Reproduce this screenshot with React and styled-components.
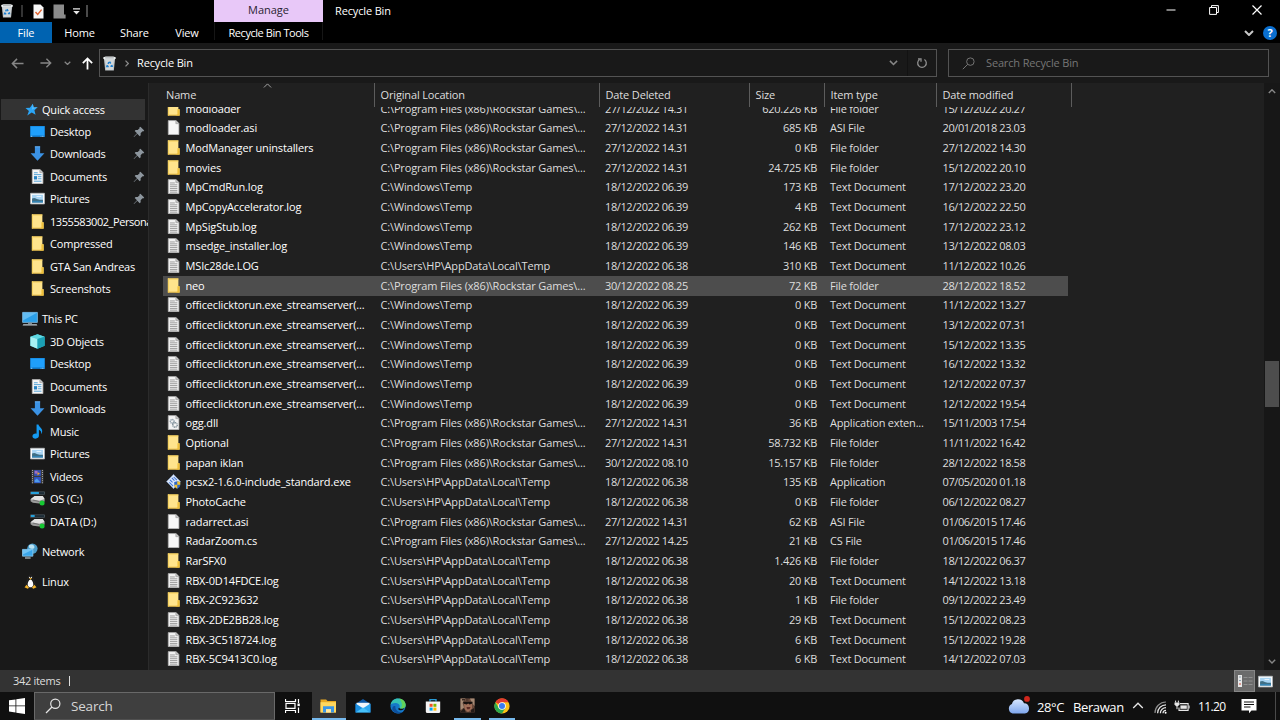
import React from 'react';
import styled, { createGlobalStyle } from 'styled-components';

const GlobalStyle = createGlobalStyle`
  * {
    box-sizing: border-box;
  }
  body {
    margin: 0;
    background: #000;
    overflow: hidden;
  }
  svg {
    display: block;
    flex-shrink: 0;
  }
`;

/* ---------- data ---------- */

const GAMES = 'C:\\Program Files (x86)\\Rockstar Games\\...';
const WIN_TEMP = 'C:\\Windows\\Temp';
const USER_TEMP = 'C:\\Users\\HP\\AppData\\Local\\Temp';

// icon, name, location, deleted, size, type, modified
const files = [
  ['folder', 'modloader', GAMES, '27/12/2022 14.31', '620.226 KB', 'File folder', '15/12/2022 20.27'],
  ['blank', 'modloader.asi', GAMES, '27/12/2022 14.31', '685 KB', 'ASI File', '20/01/2018 23.03'],
  ['folder', 'ModManager uninstallers', GAMES, '27/12/2022 14.31', '0 KB', 'File folder', '27/12/2022 14.30'],
  ['folder', 'movies', GAMES, '27/12/2022 14.31', '24.725 KB', 'File folder', '15/12/2022 20.10'],
  ['text', 'MpCmdRun.log', WIN_TEMP, '18/12/2022 06.39', '173 KB', 'Text Document', '17/12/2022 23.20'],
  ['text', 'MpCopyAccelerator.log', WIN_TEMP, '18/12/2022 06.39', '4 KB', 'Text Document', '16/12/2022 22.50'],
  ['text', 'MpSigStub.log', WIN_TEMP, '18/12/2022 06.39', '262 KB', 'Text Document', '17/12/2022 23.12'],
  ['text', 'msedge_installer.log', WIN_TEMP, '18/12/2022 06.39', '146 KB', 'Text Document', '13/12/2022 08.03'],
  ['text', 'MSIc28de.LOG', USER_TEMP, '18/12/2022 06.38', '310 KB', 'Text Document', '11/12/2022 10.26'],
  ['folder', 'neo', GAMES, '30/12/2022 08.25', '72 KB', 'File folder', '28/12/2022 18.52'],
  ['text', 'officeclicktorun.exe_streamserver(...', WIN_TEMP, '18/12/2022 06.39', '0 KB', 'Text Document', '11/12/2022 13.27'],
  ['text', 'officeclicktorun.exe_streamserver(...', WIN_TEMP, '18/12/2022 06.39', '0 KB', 'Text Document', '13/12/2022 07.31'],
  ['text', 'officeclicktorun.exe_streamserver(...', WIN_TEMP, '18/12/2022 06.39', '0 KB', 'Text Document', '15/12/2022 13.35'],
  ['text', 'officeclicktorun.exe_streamserver(...', WIN_TEMP, '18/12/2022 06.39', '0 KB', 'Text Document', '16/12/2022 13.32'],
  ['text', 'officeclicktorun.exe_streamserver(...', WIN_TEMP, '18/12/2022 06.39', '0 KB', 'Text Document', '12/12/2022 07.37'],
  ['text', 'officeclicktorun.exe_streamserver(...', WIN_TEMP, '18/12/2022 06.39', '0 KB', 'Text Document', '12/12/2022 19.54'],
  ['dll', 'ogg.dll', GAMES, '27/12/2022 14.31', '36 KB', 'Application exten...', '15/11/2003 17.54'],
  ['folder', 'Optional', GAMES, '27/12/2022 14.31', '58.732 KB', 'File folder', '11/11/2022 16.42'],
  ['folder', 'papan iklan', GAMES, '30/12/2022 08.10', '15.157 KB', 'File folder', '28/12/2022 18.58'],
  ['app', 'pcsx2-1.6.0-include_standard.exe', USER_TEMP, '18/12/2022 06.38', '135 KB', 'Application', '07/05/2020 01.18'],
  ['folder', 'PhotoCache', USER_TEMP, '18/12/2022 06.38', '0 KB', 'File folder', '06/12/2022 08.27'],
  ['blank', 'radarrect.asi', GAMES, '27/12/2022 14.31', '62 KB', 'ASI File', '01/06/2015 17.46'],
  ['blank', 'RadarZoom.cs', GAMES, '27/12/2022 14.25', '21 KB', 'CS File', '01/06/2015 17.46'],
  ['folder', 'RarSFX0', USER_TEMP, '18/12/2022 06.38', '1.426 KB', 'File folder', '18/12/2022 06.37'],
  ['text', 'RBX-0D14FDCE.log', USER_TEMP, '18/12/2022 06.38', '20 KB', 'Text Document', '14/12/2022 13.18'],
  ['folder', 'RBX-2C923632', USER_TEMP, '18/12/2022 06.38', '1 KB', 'File folder', '09/12/2022 23.49'],
  ['text', 'RBX-2DE2BB28.log', USER_TEMP, '18/12/2022 06.38', '29 KB', 'Text Document', '15/12/2022 08.23'],
  ['text', 'RBX-3C518724.log', USER_TEMP, '18/12/2022 06.38', '6 KB', 'Text Document', '15/12/2022 19.28'],
  ['text', 'RBX-5C9413C0.log', USER_TEMP, '18/12/2022 06.38', '6 KB', 'Text Document', '14/12/2022 07.03'],
];

const sidebar = [
  {
    title: 'Quick access',
    icon: 'star',
    active: true,
    items: [
      { icon: 'desktop', label: 'Desktop', pinned: true },
      { icon: 'download', label: 'Downloads', pinned: true },
      { icon: 'document', label: 'Documents', pinned: true },
      { icon: 'picture', label: 'Pictures', pinned: true },
      { icon: 'folder', label: '1355583002_Persona', tight: true },
      { icon: 'folder', label: 'Compressed' },
      { icon: 'folder', label: 'GTA San Andreas' },
      { icon: 'folder', label: 'Screenshots' },
    ],
  },
  {
    title: 'This PC',
    icon: 'pc',
    items: [
      { icon: 'cube', label: '3D Objects' },
      { icon: 'desktop', label: 'Desktop' },
      { icon: 'document', label: 'Documents' },
      { icon: 'download', label: 'Downloads' },
      { icon: 'music', label: 'Music' },
      { icon: 'picture', label: 'Pictures' },
      { icon: 'video', label: 'Videos' },
      { icon: 'driveC', label: 'OS (C:)' },
      { icon: 'driveD', label: 'DATA (D:)' },
    ],
  },
  { title: 'Network', icon: 'network', items: [] },
  { title: 'Linux', icon: 'linux', items: [] },
];

/* ---------- icons ---------- */

const Svg = ({ size = 15, children }) => (
  <svg width={size} height={size} viewBox="0 0 16 16" fill="none">{children}</svg>
);

const Drive = ({ used }) => (
  <Svg>
    <path d="M0.5 0.9h15v2.6h-15z" fill="#14242e" stroke="#5a6870" strokeWidth="0.7" />
    <path d={`M1 1h${used}v2.2H1z`} fill="#26a0da" />
    <path d="M0.6 8.8 5 5.4h8.6l2 3.4v2.4L10 13.4 3 12.6 0.6 11z" fill="#9b9b9b" />
    <path d="M0.6 8.8 5 5.2h8.6l2 3.2-6 2z" fill="#e2e2e2" />
    <path d="M3 9.6l7 1.6" stroke="#666" strokeWidth="0.8" />
    <circle cx="12.9" cy="12.8" r="2.7" fill="#16c832" />
  </Svg>
);

const icons = {
  folder: (
    <Svg>
      <path d="M2 0.4h11.2v8.4h1.3v6.6H2z" fill="#ffe48c" />
      <path d="M2 0.4h11.2v1.2H2z" fill="#f5cf58" />
      <path d="M2 0.4h1.2v15H2z" fill="#f7d362" />
      <path d="M12.2 8.8h2.3v6.6H9.8l2.4-1z" fill="#efc03a" />
      <path d="M2 14.6h12.5v0.9H2z" fill="#e8b93c" />
    </Svg>
  ),
  blank: (
    <Svg>
      <path d="M2.4 0.6h8.4l3 3v12H2.4z" fill="#f7f7f7" stroke="#a9a9a9" strokeWidth="0.8" />
      <path d="M10.5 0.7v3.2h3.2" fill="#c4c4c4" stroke="#9a9a9a" strokeWidth="0.7" />
    </Svg>
  ),
  text: (
    <Svg>
      <path d="M2.4 0.6h8.4l3 3v12H2.4z" fill="#f3f3f3" stroke="#a9a9a9" strokeWidth="0.8" />
      <path d="M10.5 0.7v3.2h3.2" fill="#c4c4c4" stroke="#9a9a9a" strokeWidth="0.7" />
      <path d="M4.2 4.2h5.2M4.2 6.2h7.9M4.2 8.2h7.9M4.2 10.2h7.9M4.2 12.2h7.9M4.2 14h7.9" stroke="#8d8d8d" strokeWidth="0.9" />
    </Svg>
  ),
  dll: (
    <Svg>
      <path d="M2.4 0.6h8.4l3 3v12H2.4z" fill="#f3f3f3" stroke="#a9a9a9" strokeWidth="0.8" />
      <path d="M10.5 0.7v3.2h3.2" fill="#c4c4c4" stroke="#9a9a9a" strokeWidth="0.7" />
      <circle cx="6.6" cy="6.8" r="2" stroke="#8798a4" strokeWidth="1.4" strokeDasharray="1.2 0.5" />
      <circle cx="9.6" cy="10.6" r="2.4" stroke="#74858f" strokeWidth="1.4" strokeDasharray="1.2 0.5" />
    </Svg>
  ),
  app: (
    <Svg size={15}>
      <path d="M8 0.4 15.4 8 8 15.6 0.6 8z" fill="#dbe7fa" stroke="#8ea6cf" strokeWidth="0.7" />
      <path d="M6.2 4.2 9 7M4.2 6.2 7 9M8.2 3.2l3.4 3.4M3.6 9l4 4" stroke="#3f74d6" strokeWidth="1.1" />
      <path d="M8.8 8.6 12 7.6l3.2 1v3c0 2-1.6 3.2-3.2 4-1.6-.8-3.2-2-3.2-4z" fill="#2c66c9" />
      <path d="M12 7.6l3.2 1v2.9H12zM8.8 11.5H12v4.1c-1.6-.8-3.2-2-3.2-4z" fill="#f2c230" />
    </Svg>
  ),
  star: (
    <Svg size={13}>
      <path d="M9.6 0.8 10.6 5.400l5-.2-4 3.700 1.400 5.700-4.700-2.800L2.800 15.400l2-5.600L0.600 6.200 6 5.800z" fill="#2ba6f7" />
      <path d="M9.600 0.800 10.600 5.400l5-.2-7.200 3z" fill="#53bdff" />
    </Svg>
  ),
  desktop: (
    <Svg>
      <path d="M0.2 2.2h15.6v11.6H0.2z" fill="#1793f0" />
      <path d="M1 3h14v8.6L1 12z" fill="#1f9ffb" />
      <path d="M0.2 12.4h15.6v1.4H0.2z" fill="#1272bb" />
      <path d="M1 13.1h1.4M11.4 13.1h.8M13 13.1h1.4" stroke="#cfeaff" strokeWidth="0.8" />
    </Svg>
  ),
  download: (
    <Svg>
      <path d="M5.2 0.4h5.6v7.400h4.600L8 15.800 0.6 7.800h4.600z" fill="#3b92e4" />
      <path d="M5.2 0.4h5.600v1H5.200z" fill="#69b2f3" />
    </Svg>
  ),
  document: (
    <Svg>
      <path d="M2.4 0.6h8.4l3 3v12H2.4z" fill="#f7f7f7" stroke="#b5b5b5" strokeWidth="0.8" />
      <path d="M10.5 0.7v3.2h3.2" fill="#c4c4c4" stroke="#9a9a9a" strokeWidth="0.7" />
      <path d="M4.2 4h4M4.2 6h8M4.2 13h8" stroke="#4da0d8" strokeWidth="1" />
      <path d="M4.2 7.6h3.4v3.6H4.2z" fill="#2884c4" />
      <path d="M8.6 8.2h3.6M8.6 10.4h3.6" stroke="#4da0d8" strokeWidth="1" />
    </Svg>
  ),
  picture: (
    <Svg>
      <path d="M0.6 2.4h14.8v11.4H0.6z" fill="#fff" stroke="#b6bcc0" strokeWidth="0.8" />
      <path d="M2.2 4h11.6v8.2H2.2z" fill="#a9d5f4" />
      <path d="M2.2 8c3-1.6 4 .2 6 .8 2.4.6 3.6.6 5.6.4v3H2.2z" fill="#3f6f86" />
      <path d="M2.2 10.8h11.6v1.4H2.2z" fill="#3285b9" />
      <path d="M7 5.4h5v1H7z" fill="#e9f5fd" />
    </Svg>
  ),
  pc: (
    <Svg size={16}>
      <path d="M0.6 1.4h14.8v10H0.6z" fill="#2b9fe8" stroke="#8fcdf3" strokeWidth="0.7" />
      <path d="M1 1.8h14L1 9.6z" fill="#63bdf3" />
      <path d="M6 11.6h4v1.4H6z" fill="#7f8c94" />
      <path d="M1.4 13.2h13.2l.8 1.4H.6z" fill="#c2ccd3" />
    </Svg>
  ),
  cube: (
    <Svg>
      <path d="M8 0.2 15.6 3v9.6L8 15.8 0.4 12.6V3z" fill="#35bdce" />
      <path d="M8 0.2 15.6 3 8 5.2 0.4 3z" fill="#5fd8e2" />
      <path d="M0.4 3 8 5.2v10.6L0.4 12.6z" fill="#a8f0f2" />
      <path d="M8 5.2 15.6 3v9.6L8 15.8z" fill="#1ba0b4" />
    </Svg>
  ),
  music: (
    <Svg>
      <path d="M7 0.6h2c.4 2.4 4 3.6 4 6.8 0 1.4-.5 2.4-1.2 3.2.5-2.6-.4-3.8-2.3-4.6v6.600c0 1.800-1.600 3-3.600 3S2.600 14.600 2.600 13c0-1.700 1.700-2.800 3.400-2.800.4 0 .7 0 1 .1z" fill="#149af2" />
    </Svg>
  ),
  video: (
    <Svg>
      <path d="M1.6 0.8h12.8v14.6H1.6z" fill="#3b3b3b" />
      <path d="M2.7 1v14.2M13.3 1v14.2" stroke="#b9b9b9" strokeWidth="1" strokeDasharray="1 1.2" />
      <path d="M4.4 1.2h7.2v6.2H4.4z" fill="#3550b4" />
      <path d="M4.4 8.6h7.2v6.4H4.4z" fill="#2f55c4" />
      <path d="M5 2h3v3H5z" fill="#a06ec0" />
      <path d="M8 3.4l2.6 1.2L8 6.8z" fill="#f0a12c" />
      <path d="M5 12l2.4-2 3.6 4H5z" fill="#4f9be8" />
    </Svg>
  ),
  driveC: <Drive used={8.5} />,
  driveD: <Drive used={4} />,
  network: (
    <Svg size={16}>
      <circle cx="10.4" cy="5.6" r="5.2" fill="#4a9cc9" />
      <path d="M7 2.2c3-2 6 0 5.400 2.200S8.600 6 7 4.600z" fill="#b9e2f3" />
      <path d="M0.5 6.4h10.4v6.8H0.5z" fill="#3aa6ea" stroke="#9fd7f7" strokeWidth="0.7" />
      <path d="M0.8 6.7h9.8L0.8 11.6z" fill="#71c4f5" />
      <path d="M3 14.4h5.6v1.2H3z" fill="#b9c4ca" />
    </Svg>
  ),
  linux: (
    <Svg>
      <path d="M8 1.2c2 0 2.500 1.500 2.500 3.400 0 2 2.500 4 2.500 7.400 0 1.600-1.500 2.600-5 2.600S3 13.600 3 12c0-3.400 2.500-5.400 2.500-7.400 0-1.900.5-3.400 2.500-3.400z" fill="#161616" stroke="#343434" strokeWidth="0.5" />
      <path d="M8 5.8c1.500 0 3 3 3 5.400 0 2-1.400 3-3 3s-3-1-3-3c0-2.400 1.500-5.400 3-5.400z" fill="#fafafa" />
      <path d="M6.6 4.6 8 4l1.400.6L8 6.200z" fill="#f5b42a" />
      <circle cx="7" cy="3.5" r="0.7" fill="#fff" />
      <circle cx="9" cy="3.5" r="0.7" fill="#fff" />
      <path d="M1.6 14.2 4 11.4l2.4 3.2-1.4 1z M14.4 14.2 12 11.4l-2.4 3.2 1.400 1z" fill="#f5b42a" />
    </Svg>
  ),
};

const BinIcon = ({ size = 15 }) => (
  <Svg size={size}>
    <path d="M2 2.400h12l-1.400 13H3.400z" fill="#bcc2c5" />
    <path d="M1.4 1.2 4 0.4h8l2.600.8v1.600L13 3.600H3l-1.600-.8z" fill="#edf0f1" />
    <path d="M3.4 1.6h9.2v.9H3.4z" fill="#8f979b" />
    <path d="M3.4 3.8h9.2l-1 10.8H4.4z" fill="#d3d8da" />
    <path d="M8 6l1.300 2M10.400 9.400l.4 1.600H9M7.200 11.200H5.200L5.700 9.600M6.400 8.400 7.400 6.400" stroke="#1d7fd0" strokeWidth="1.600" />
  </Svg>
);

const PinIcon = () => (
  <svg width="12" height="12" viewBox="0 0 12 12">
    <path d="M7.4 0.8l3.800 3.800-1 1-.7-.3-1.900 2 .1 2-1 .9-2.400-2.500L1 11l-.4-.3L4 7.200 1.700 5l.9-1 2.100.1 1.900-1.900-.3-.6z" fill="#8d969e" />
  </svg>
);

const Chevron = ({ dir = 'down', w = 9, color = '#9a9a9a', stroke = 1.4 }) => (
  <svg width={w} height={w * 0.6} viewBox="0 0 10 6" fill="none">
    <path d={dir === 'down' ? 'M1 1l4 4 4-4' : 'M1 5l4-4 4 4'} stroke={color} strokeWidth={stroke} />
  </svg>
);

const Arrow = ({ dir, color, size = 14 }) => {
  const paths = {
    left: 'M13.5 7H1.5M6.5 2 1.5 7l5 5',
    right: 'M0.5 7h12M7.5 2l5 5-5 5',
    up: 'M7 13.5v-12M2 6.5l5-5 5 5',
  };
  return (
    <svg width={size} height={size} viewBox="0 0 14 14" fill="none">
      <path d={paths[dir]} stroke={color} strokeWidth={dir === 'up' ? 1.9 : 1.6} />
    </svg>
  );
};

const SearchIcon = ({ size, color }) => (
  <svg width={size} height={size} viewBox="0 0 16 16" fill="none">
    <circle cx="10.3" cy="5.7" r="4.6" stroke={color} strokeWidth="1.2" />
    <path d="M7 9 1 15" stroke={color} strokeWidth="1.2" />
  </svg>
);

/* ---------- layout ---------- */

const Window = styled.div`
  width: 1280px;
  height: 720px;
  display: flex;
  flex-direction: column;
  overflow: hidden;
  background: #191919;
  color: #fff;
  font-family: 'Open Sans', 'Noto Sans', sans-serif;
  font-size: 11px;
  letter-spacing: -0.15px;
  white-space: nowrap;
  cursor: default;
`;

const TitleBar = styled.div`
  height: 22px;
  display: flex;
  background: #000;
`;

const QuickTools = styled.div`
  width: 214px;
  display: flex;
  align-items: center;
`;

const ToolSlot = styled.div`
  width: ${(p) => p.$w}px;
  display: flex;
`;

const ToolDivider = styled.div`
  width: 2px;
  height: 12px;
  background: ${(p) => p.$color || '#333'};
`;

const ManageTab = styled.div`
  width: 109px;
  text-align: center;
  line-height: 19px;
  letter-spacing: 0;
  background: #e8c8f8;
  color: #2a1f30;
`;

const WindowTitle = styled.div`
  flex: 1;
  padding-left: 12px;
  line-height: 22px;
`;

const WindowButtons = styled.div`
  display: flex;
  padding-right: 2px;
`;

const WindowButton = styled.div`
  width: 43px;
  height: 20px;
  display: flex;
  align-items: center;
  justify-content: center;
`;

const Ribbon = styled.div`
  height: 21px;
  display: flex;
  background: #000;
`;

const RibbonTab = styled.div`
  width: ${(p) => p.$w}px;
  text-align: center;
  line-height: 22px;
  background: ${(p) => (p.$file ? '#0063b1' : 'transparent')};
`;

const ToolsTab = styled.div`
  width: 109px;
  height: 18px;
  margin-left: 2px;
  text-align: center;
  line-height: 22px;
  letter-spacing: -0.45px;
  border: solid #161616;
  border-width: 0 1px;
`;

const RibbonEnd = styled.div`
  flex: 1;
  display: flex;
  align-items: center;
  justify-content: flex-end;
  gap: 9px;
  padding-right: 3px;
`;

const HelpBadge = styled.div`
  width: 14px;
  height: 14px;
  border-radius: 50%;
  background: #0a6fd0;
  font-weight: 700;
  line-height: 14px;
  text-align: center;
`;

const AddressRow = styled.div`
  height: 40px;
  padding: 6px 11px 6px 0;
  display: flex;
  background: #191919;
`;

const NavButtons = styled.div`
  width: 99px;
  padding: 0 5px 0 11px;
  display: flex;
  align-items: center;
`;

const NavGap = styled.div`
  width: ${(p) => p.$w}px;
`;

const Field = styled.div`
  width: ${(p) => p.$w}px;
  height: 28px;
  margin-right: ${(p) => p.$gap || 0}px;
  padding-left: ${(p) => p.$pad}px;
  display: flex;
  align-items: center;
  gap: ${(p) => p.$inner}px;
  border: 1px solid #535353;
  background: #191919;
  color: ${(p) => p.$color || '#fff'};
`;

const FieldText = styled.span`
  padding-bottom: 2px;
`;

const FieldEnd = styled.div`
  height: 26px;
  margin-left: auto;
  display: flex;
`;

const FieldButton = styled.div`
  width: 28px;
  display: flex;
  align-items: center;
  justify-content: center;
  border-right: ${(p) => (p.$divided ? '1px solid #121212' : 0)};
`;

const Body = styled.div`
  height: 587px;
  display: flex;
`;

const Sidebar = styled.div`
  width: 149px;
  padding-top: 16px;
  overflow: hidden;
  border-right: 1px solid #2b2b2b;
  background: #191919;
`;

const Group = styled.div`
  margin-bottom: 7.5px;
`;

const SideItem = styled.div`
  width: 144px;
  height: ${(p) => (p.$active ? 21 : 22.5)}px;
  margin-left: 1px;
  padding-left: ${(p) => (p.$child ? 28 : 21)}px;
  display: flex;
  align-items: center;
  background: ${(p) => (p.$active ? '#333' : 'transparent')};
`;

const SideIcon = styled.div`
  width: 16px;
  margin-right: ${(p) => (p.$child ? 5 : 4)}px;
  padding-left: ${(p) => (p.$active ? 2 : 0)}px;
  display: flex;
  justify-content: center;
  flex-shrink: 0;
`;

const SideLabel = styled.div`
  flex: 1;
  letter-spacing: ${(p) => (p.$tight ? -0.43 : -0.2)}px;
`;

const PinSlot = styled.div`
  padding: 1px 0 0 0;
`;

const Content = styled.div`
  flex: 1;
  background: #202020;
  overflow: hidden;
`;

const Header = styled.div`
  height: 24px;
  display: flex;
`;

const HeaderCell = styled.div`
  position: relative;
  width: ${(p) => p.$w}px;
  padding-left: ${(p) => p.$pad || 5.5}px;
  line-height: 24px;
  color: #dedede;
  border-right: 1px solid #5c5c5c;
`;

// lies over the name header, centred on the column
const SortMark = styled.div`
  position: absolute;
  top: 0;
  left: 114px;
`;

const List = styled.div`
  height: 563px;
  overflow: hidden;
`;

const Rows = styled.div`
  margin-top: -8px;
`;

const Row = styled.div`
  width: 905px;
  height: 19.68px;
  margin-left: 14px;
  padding-bottom: 1.4px;
  display: flex;
  align-items: center;
  background: ${(p) => (p.$hover ? '#4d4d4d' : 'transparent')};
`;

const FileIcon = styled.div`
  width: 22.5px;
  padding-left: 3px;
`;

const Cell = styled.div`
  width: ${(p) => p.$w}px;
  text-align: ${(p) => (p.$right ? 'right' : 'left')};
  color: ${(p) => (p.$name ? '#fff' : '#dedede')};
`;

const DateCell = styled(Cell)`
  letter-spacing: -0.4px;
`;

const SizeCell = styled(Cell)`
  padding-right: 7px;
  letter-spacing: -0.25px;
`;

const Scrollbar = styled.div`
  width: 16px;
  padding: 6px 0;
  display: flex;
  flex-direction: column;
  align-items: center;
  background: #171717;
`;

const Track = styled.div`
  flex: 1;
  padding-top: 267px;
`;

const Thumb = styled.div`
  width: 14px;
  height: 46px;
  background: #4d4d4d;
`;

const StatusBar = styled.div`
  height: 22px;
  padding: 0 4px 0 13px;
  display: flex;
  align-items: center;
  background: #333;
  color: #dedede;
`;

const StatusText = styled.div`
  padding-bottom: 1px;
  letter-spacing: -0.3px;
`;

const StatusDivider = styled.div`
  width: 1px;
  height: 10px;
  margin-left: 9px;
  background: #dedede;
`;

const ViewButtons = styled.div`
  height: 22px;
  margin-left: auto;
  display: flex;
`;

const ViewButton = styled.div`
  width: 21px;
  display: flex;
  align-items: center;
  justify-content: center;
  background: ${(p) => (p.$on ? '#6b6b6b' : 'transparent')};
  border: 1px solid ${(p) => (p.$on ? '#868686' : 'transparent')};
`;

const Taskbar = styled.div`
  height: 28px;
  display: flex;
  background: #101010;
`;

const TaskButton = styled.div`
  width: ${(p) => p.$w || 34.6}px;
  display: flex;
  flex-direction: column;
  align-items: center;
  background: ${(p) => (p.$active ? '#333' : 'transparent')};
`;

const TaskIcon = styled.div`
  height: 26px;
  display: flex;
  align-items: center;
  padding-top: 1px;
`;

const Underline = styled.div`
  width: ${(p) => p.$w}px;
  height: 2px;
  background: #76b9ed;
`;

const TaskSearch = styled.div`
  width: 241px;
  padding-left: 10px;
  display: flex;
  align-items: center;
  gap: 10px;
  background: #3f3f3f;
  border: 1px solid #696969;
  border-bottom-color: #505050;
  color: #d6d6d6;
  font-size: 13.5px;
  letter-spacing: -0.2px;
`;

const Tray = styled.div`
  width: 274px;
  margin-left: auto;
  display: flex;
  align-items: center;
`;

const TraySlot = styled.div`
  width: ${(p) => p.$w}px;
  font-size: ${(p) => p.$font || 13}px;
  letter-spacing: ${(p) => p.$track || -0.4}px;
  padding-top: ${(p) => p.$drop || 0}px;
`;

const DesktopEdge = styled.div`
  width: 1px;
  height: 28px;
  background: #4a4a4a;
`;

/* ---------- parts ---------- */

const TopBar = () => (
  <>
    <TitleBar>
      <QuickTools>
        <ToolSlot $w={21}><BinIcon size={14} /></ToolSlot>
        <ToolSlot $w={12}><ToolDivider /></ToolSlot>
        <ToolSlot $w={20}>
          <svg width="11" height="15" viewBox="0 0 11 15" fill="none">
            <path d="M0.500 0.500h7l3 3v11h-10z" fill="#f6f6f6" />
            <path d="M2.500 8l2.200 2.400L8.600 5.600" stroke="#e0602c" strokeWidth="1.400" />
          </svg>
        </ToolSlot>
        <ToolSlot $w={19}>
          <svg width="13" height="15" viewBox="0 0 13 15">
            <path d="M0.500 0.500h10.500v10h1.600v4H0.500z" fill="#8b8b8b" />
          </svg>
        </ToolSlot>
        <ToolSlot $w={14}>
          <svg width="9" height="7" viewBox="0 0 9 7">
            <path d="M1 0.300h7v1.200H1zM1.200 3h6.600L4.500 6.400z" fill="#e6e6e6" />
          </svg>
        </ToolSlot>
        <ToolDivider $color="#4a4a4a" />
      </QuickTools>
      <ManageTab>Manage</ManageTab>
      <WindowTitle>Recycle Bin</WindowTitle>
      <WindowButtons>
        <WindowButton>
          <svg width="10" height="10" viewBox="0 0 10 10"><path d="M0.500 4.500h9v1h-9z" fill="#fff" /></svg>
        </WindowButton>
        <WindowButton>
          <svg width="10" height="10" viewBox="0 0 10 10" fill="none">
            <path d="M0.600 2.500h6.900v6.900H0.600zM2.500 2.500V0.600h6.900v6.900H7.500" stroke="#fff" />
          </svg>
        </WindowButton>
        <WindowButton>
          <svg width="10" height="10" viewBox="0 0 10 10"><path d="M0.500 0.500l9 9M9.500 0.500l-9 9" stroke="#fff" strokeWidth="1.200" /></svg>
        </WindowButton>
      </WindowButtons>
    </TitleBar>
    <Ribbon>
      <RibbonTab $w={52} $file>File</RibbonTab>
      <RibbonTab $w={55}>Home</RibbonTab>
      <RibbonTab $w={55}>Share</RibbonTab>
      <RibbonTab $w={50}>View</RibbonTab>
      <ToolsTab>Recycle Bin Tools</ToolsTab>
      <RibbonEnd>
        <Chevron w={10} color="#c8c8c8" stroke={2} />
        <HelpBadge>?</HelpBadge>
      </RibbonEnd>
    </Ribbon>
  </>
);

const AddressBar = () => (
  <AddressRow>
    <NavButtons>
      <Arrow dir="left" color="#868686" size={13} />
      <NavGap $w={16} />
      <Arrow dir="right" color="#868686" size={12} />
      <NavGap $w={12} />
      <Chevron w={7} color="#868686" stroke={1.8} />
      <NavGap $w={10} />
      <Arrow dir="up" color="#fff" size={13} />
    </NavButtons>
    <Field $w={838} $gap={11} $pad={2} $inner={8}>
      <BinIcon size={15} />
      <svg width="4" height="7" viewBox="0 0 4 7" fill="none"><path d="M0.500 0.600l2.800 2.900-2.800 2.900" stroke="#8b8b8b" strokeWidth="1.200" /></svg>
      <FieldText>Recycle Bin</FieldText>
      <FieldEnd>
        <FieldButton $divided><Chevron w={9} color="#868686" stroke={1.7} /></FieldButton>
        <FieldButton>
          <svg width="12" height="12" viewBox="0 0 12 12" fill="none">
            <path d="M8.400 2.500A4.300 4.300 0 1 1 3.600 2.500M2 1.800h3v3" stroke="#8f8f8f" strokeWidth="1.300" />
          </svg>
        </FieldButton>
      </FieldEnd>
    </Field>
    <Field $w={321} $pad={13} $inner={11} $color="#767676">
      <SearchIcon size={13} color="#767676" />
      <FieldText>Search Recycle Bin</FieldText>
    </Field>
  </AddressRow>
);

const SideRow = ({ icon, label, child, active, pinned, tight }) => (
  <SideItem $child={child} $active={active}>
    <SideIcon $child={child} $active={active}>{icons[icon]}</SideIcon>
    <SideLabel $tight={tight}>{label}</SideLabel>
    {pinned && <PinSlot><PinIcon /></PinSlot>}
  </SideItem>
);

const FileList = () => (
  <Content>
    <Header>
      <HeaderCell $w={226} $pad={17}>
        Name
        <SortMark><Chevron dir="up" w={9} stroke={1} color="#b0b0b0" /></SortMark>
      </HeaderCell>
      <HeaderCell $w={225}>Original Location</HeaderCell>
      <HeaderCell $w={150}>Date Deleted</HeaderCell>
      <HeaderCell $w={75}>Size</HeaderCell>
      <HeaderCell $w={112}>Item type</HeaderCell>
      <HeaderCell $w={135}>Date modified</HeaderCell>
    </Header>
    <List>
      <Rows>
        {files.map(([icon, name, location, deleted, size, type, modified], i) => (
          <Row key={i} $hover={name === 'neo'}>
            <FileIcon>{icons[icon]}</FileIcon>
            <Cell $w={195} $name>{name}</Cell>
            <Cell $w={224.5}>{location}</Cell>
            <DateCell $w={144}>{deleted}</DateCell>
            <SizeCell $w={75} $right>{size}</SizeCell>
            <Cell $w={118.5 - 6 + 6}>
              <TypeText>{type}</TypeText>
            </Cell>
            <DateCell $w={120}>{modified}</DateCell>
          </Row>
        ))}
      </Rows>
    </List>
  </Content>
);

const TypeText = styled.span`
  padding-left: 6px;
  letter-spacing: -0.2px;
`;

const TaskbarRow = () => (
  <Taskbar>
    <TaskButton $w={34}>
      <TaskIcon>
        <svg width="16" height="16" viewBox="0 0 16 16">
          <path d="M0 2.300 6.500 1.400v6.100H0zM7.300 1.300 16 0v7.500H7.300zM0 8.300h6.500v6.200L0 13.600zM7.300 8.300H16V16l-8.700-1.300z" fill="#fff" />
        </svg>
      </TaskIcon>
    </TaskButton>
    <TaskSearch>
      <SearchIcon size={16} color="#e6e6e6" />
      <span>Search</span>
    </TaskSearch>
    <TaskButton $w={36.5}>
      <TaskIcon>
        <svg width="16" height="16" viewBox="0 0 16 16" fill="none">
          <path d="M0.500 1v2.500h10V1M0.500 15v-2.500h10V15" stroke="#fff" strokeWidth="1.200" />
          <path d="M1 5.400h9v5H1z" stroke="#fff" strokeWidth="1.200" />
          <path d="M13.500 1v4M13.500 9.500V15" stroke="#fff" strokeWidth="1.200" />
          <path d="M12.500 5.500h2.300v2.600h-2.300z" fill="#fff" />
        </svg>
      </TaskIcon>
    </TaskButton>
    <TaskButton $active>
      <TaskIcon>
        <svg width="17" height="16" viewBox="0 0 17 16">
          <path d="M0.500 1.500h5.600l1.400 1.600H16v11.400H0.500z" fill="#e9a922" />
          <path d="M0.500 4.200H16v10.300H0.500z" fill="#ffd75e" />
          <path d="M3 8.200h11v6.300h-3v-3.300H6v3.300H3z" fill="#3a96e6" />
          <path d="M6 11.200h5v3.300H6z" fill="#ffe9a0" />
        </svg>
      </TaskIcon>
      <Underline $w={34.6} />
    </TaskButton>
    <TaskButton>
      <TaskIcon>
        <svg width="16" height="16" viewBox="0 0 16 16">
          <path d="M0.500 6 8 1l7.500 5v8.500h-15z" fill="#0f5aa8" />
          <path d="M1.500 4.800h13V10h-13z" fill="#f2f6fa" />
          <path d="M0.500 5.500 8 10.200 0.500 14.500z" fill="#1b8fe0" />
          <path d="M15.500 5.500 8 10.200l7.500 4.300z" fill="#2ea8f0" />
          <path d="M0.500 14.500 8 9.600l7.500 4.900z" fill="#45c1fa" />
        </svg>
      </TaskIcon>
    </TaskButton>
    <TaskButton>
      <TaskIcon>
        <svg width="16" height="16" viewBox="0 0 16 16">
          <circle cx="8" cy="8" r="7.600" fill="#1578c8" />
          <path d="M0.500 7C1 3 4 0.400 8 0.400c4.500 0 7.600 3 7.600 6.600 0 2.600-1.800 3.800-4 3.800-1.600 0-2.600-.6-2.200-1.400.8-1.400.2-3.800-2.600-4.200C4 4.800 1.600 5.600 0.500 7z" fill="#35c1b4" />
          <path d="M9 0.500c4 .4 6.600 3.200 6.600 6.500 0 2.600-1.800 3.800-4 3.800-.8 0-1.500-.2-1.900-.5 3-.6 3.300-5.600-.7-9.800z" fill="#62d35a" />
          <path d="M5.400 8.200c-.4 4 3 6.800 7.400 5.800C10.400 16.200 5 16.200 2.600 12.600c-1-3 .6-5.400 2.800-4.400z" fill="#0d4f9c" />
          <path d="M9.400 9.400c-.4.800.6 1.400 2.200 1.400 1.400 0 2.400-.4 3-1-.6 1.800-2.400 2.800-4.400 2.400-2-.3-2.600-1.800-.8-2.800z" fill="#101010" />
        </svg>
      </TaskIcon>
    </TaskButton>
    <TaskButton>
      <TaskIcon>
        <svg width="16" height="16" viewBox="0 0 16 16">
          <path d="M5 3.400V1.600h6v1.800" fill="none" stroke="#2a9bd6" strokeWidth="1.400" />
          <path d="M0.800 3.400h14.400v10q0 1.600-1.600 1.600H2.400q-1.600 0-1.600-1.600z" fill="#f4f4f4" />
          <path d="M4.600 5.800h3v3h-3z" fill="#f25022" />
          <path d="M8.400 5.800h3v3h-3z" fill="#7fba00" />
          <path d="M4.600 9.600h3v3h-3z" fill="#00a4ef" />
          <path d="M8.400 9.600h3v3h-3z" fill="#ffb900" />
        </svg>
      </TaskIcon>
    </TaskButton>
    <TaskButton>
      <TaskIcon>
        <svg width="15" height="15" viewBox="0 0 15 15">
          <path d="M0.500 0.500h14v14H0.500z" fill="#6b4b3c" />
          <path d="M0.500 0.500h5L2.500 5 4 9.500.5 12zM10 .5h4.500V8L12 5z" fill="#a58a75" />
          <path d="M4 4.500h8v6L8 14l-3.500-3z" fill="#a06e58" />
          <path d="M3 3.800h9.500v1.700l-3 .9-1.300-1-1.500 1.200-3-.8z" fill="#17110f" />
          <path d="M6.500 9h4l-1 2.200H7z" fill="#5c2c24" />
          <path d="M2 1h3v1.500H2zM6 1.500h2.500v1H6z" fill="#3a2a22" />
          <path d="M1 13l3-3 2 4.500H1zM11 12l3-2v4.500h-3z" fill="#251b18" />
        </svg>
      </TaskIcon>
      <Underline $w={27} />
    </TaskButton>
    <TaskButton>
      <TaskIcon>
        <svg width="16" height="16" viewBox="0 0 16 16">
          <circle cx="8" cy="8" r="7.600" fill="#fbc116" />
          <path d="M8 8 1.400 4.200A7.600 7.600 0 0 1 14.600 4.200H8z" fill="#e33b2e" />
          <path d="M1.400 4.200A7.600 7.600 0 0 0 8 15.600L11.300 9.900 8 8 4.700 9.900z" fill="#2da94f" />
          <circle cx="8" cy="8" r="3.800" fill="#fff" />
          <circle cx="8" cy="8" r="3" fill="#3a7cf0" />
        </svg>
      </TaskIcon>
      <Underline $w={26} />
    </TaskButton>
    <Tray>
      <TraySlot $w={31}>
        <svg width="25" height="20" viewBox="0 0 25 20">
          <defs>
            <linearGradient id="cloud" x1="0" y1="0" x2="0" y2="1">
              <stop offset="0" stopColor="#d6e6ff" />
              <stop offset="1" stopColor="#7ea6ec" />
            </linearGradient>
          </defs>
          <path d="M6.500 17.500a5 5 0 0 1-.6-9.400A6.400 6.400 0 0 1 18 7.200a5.200 5.200 0 0 1 .8 10.300z" fill="url(#cloud)" />
          <circle cx="21" cy="2.900" r="2.900" fill="#d1271d" />
        </svg>
      </TraySlot>
      <TraySlot $w={36} $drop={2}>28°C</TraySlot>
      <TraySlot $w={59} $drop={2}>Berawan</TraySlot>
      <TraySlot $w={22}><Chevron dir="up" w={12} color="#e6e6e6" stroke={1.1} /></TraySlot>
      <TraySlot $w={20} $drop={2}>
        <svg width="13" height="13" viewBox="0 0 13 13" fill="none">
          <path d="M1 12A11 11 0 0 1 12 1" stroke="#8d8d8d" strokeWidth="1.200" />
          <path d="M3.600 12.200A8.400 8.400 0 0 1 12 3.800M6.400 12.200A5.600 5.600 0 0 1 12 6.600M9 12.300a3 3 0 0 1 3-3" stroke="#e6e6e6" strokeWidth="1.200" />
          <circle cx="11.600" cy="11.800" r="1" fill="#fff" />
        </svg>
      </TraySlot>
      <TraySlot $w={24}>
        <svg width="16" height="13" viewBox="0 0 16 13" fill="none">
          <path d="M6 3.600h8.100v6.800H5V7.500" stroke="#e6e6e6" strokeWidth="1.100" />
          <path d="M6.400 5.400h6.400v3.400H6.400z" fill="#e6e6e6" />
          <path d="M14.600 5.600h1v2.800h-1z" fill="#e6e6e6" />
          <path d="M1.600 0.600v2M4.400 0.600v2" stroke="#e6e6e6" strokeWidth="1" />
          <path d="M0.500 2.400h5v2.200L4 6.200H2L0.500 4.600z" fill="#e6e6e6" />
          <path d="M3 6v3.200" stroke="#e6e6e6" strokeWidth="1" />
        </svg>
      </TraySlot>
      <TraySlot $w={43} $font={12} $track={-0.6}>11.20</TraySlot>
      <TraySlot $w={34}>
        <svg width="16" height="16" viewBox="0 0 16 16">
          <path d="M0.500 1h15v11.500H10.500L8 15.200V12.500H0.500z" fill="#fff" />
          <path d="M3 4h10M3 6.500h10M3 9h6.500" stroke="#101010" strokeWidth="1.100" />
        </svg>
      </TraySlot>
      <DesktopEdge />
    </Tray>
  </Taskbar>
);

export default function App() {
  return (
    <Window>
      <GlobalStyle />
      <TopBar />
      <AddressBar />
      <Body>
        <Sidebar>
          {sidebar.map((group) => (
            <Group key={group.title}>
              <SideRow icon={group.icon} label={group.title} active={group.active} />
              {group.items.map((item) => (
                <SideRow key={item.label} child {...item} />
              ))}
            </Group>
          ))}
        </Sidebar>
        <FileList />
        <Scrollbar>
          <Chevron dir="up" w={8} color="#868686" stroke={1.8} />
          <Track><Thumb /></Track>
          <Chevron w={8} color="#868686" stroke={1.8} />
        </Scrollbar>
      </Body>
      <StatusBar>
        <StatusText>342 items</StatusText>
        <StatusDivider />
        <ViewButtons>
          <ViewButton $on>
            <svg width="17" height="14" viewBox="0 0 17 14">
              <path d="M2 1h4v12H2z" fill="#e8e8e8" />
              <path d="M3 3h2M3 6.500h2" stroke="#8aa0b0" />
              <path d="M3 10h2" stroke="#d04a3c" />
              <path d="M7.500 3.500h4M12.500 3.500h4M7.500 7h4M12.500 7h4M7.500 10.500h4M12.500 10.500h4" stroke="#8f8f8f" />
            </svg>
          </ViewButton>
          <ViewButton>{icons.picture}</ViewButton>
        </ViewButtons>
      </StatusBar>
      <TaskbarRow />
    </Window>
  );
}
